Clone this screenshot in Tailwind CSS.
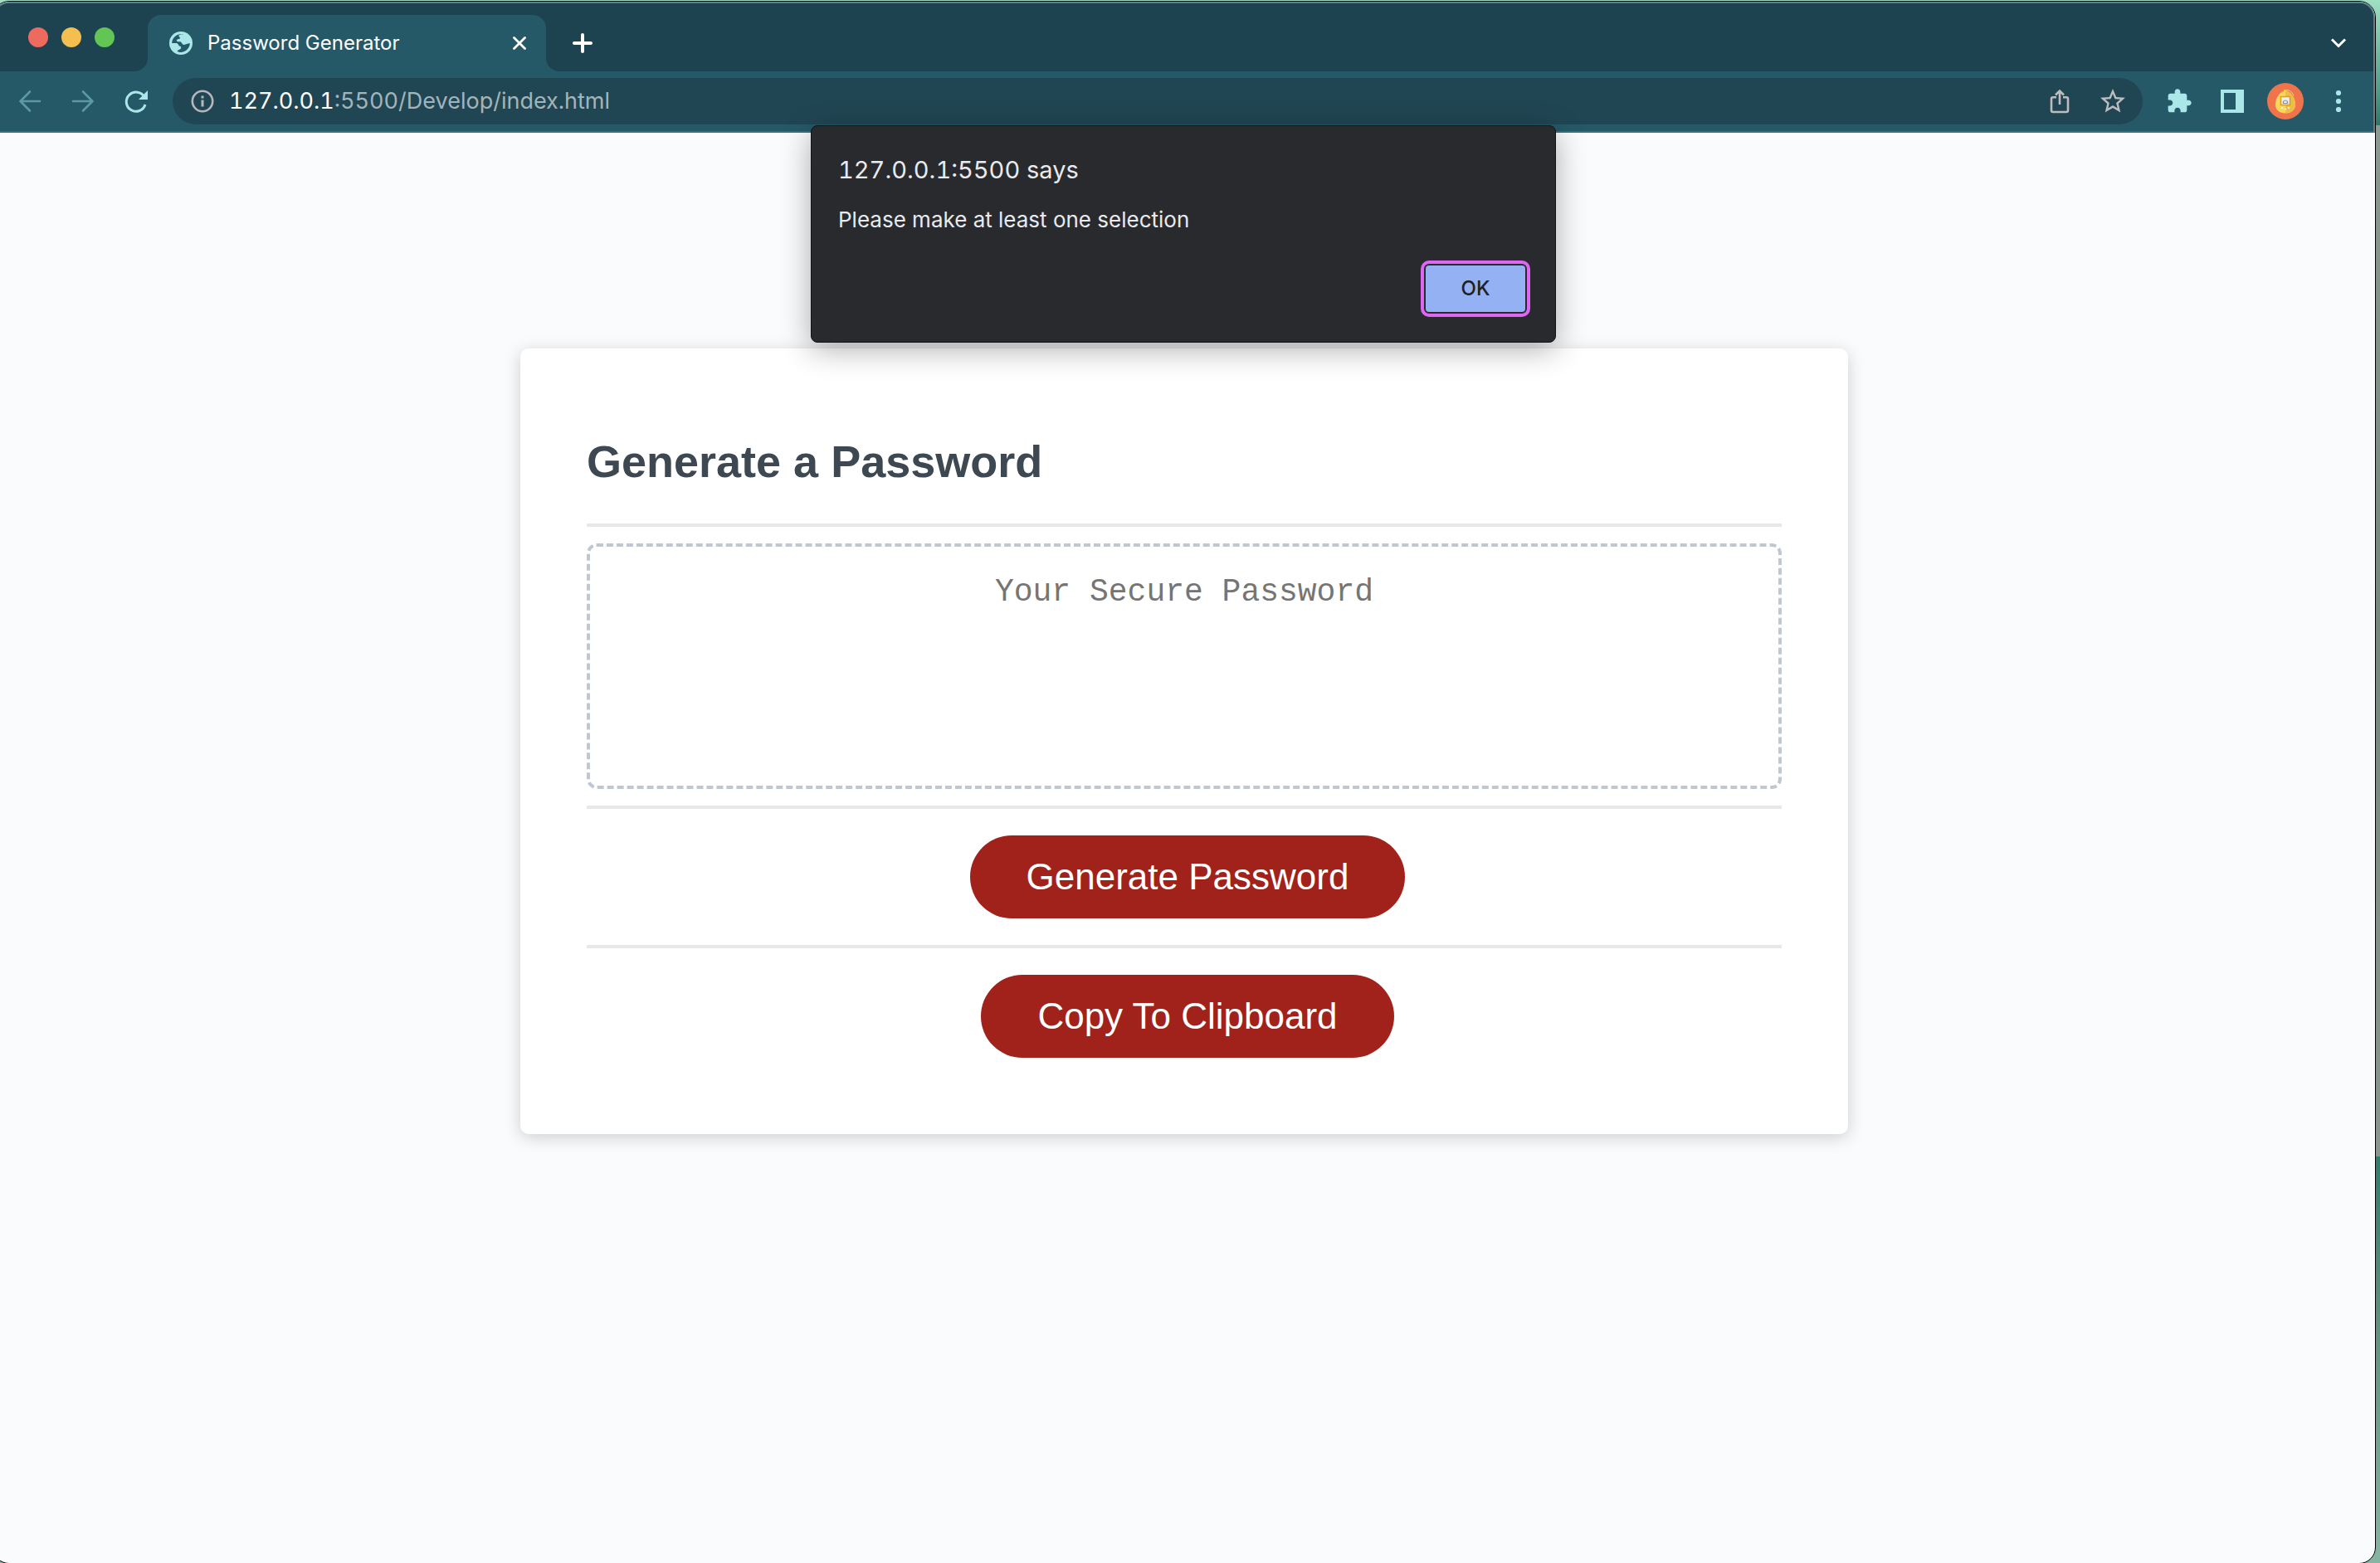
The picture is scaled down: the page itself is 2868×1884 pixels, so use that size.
<!DOCTYPE html>
<html lang="en">
<head>
<meta charset="utf-8">
<meta name="viewport" content="width=device-width, initial-scale=1">
<title>Password Generator</title>
<script src="https://cdn.jsdelivr.net/npm/@tailwindcss/browser@4"></script>
</head>
<body class="flex h-screen overflow-hidden bg-[linear-gradient(to_bottom,#9fe0c4_0%,#4f9a86_6%,#2f7668_8%,#8b9a92_8%,#74887e_40%,#8a968f_74%,#2f7d6c_74%,#5f8f7d_84%,#86b5a3_100%)] font-['Inter',sans-serif]">

<!-- Browser window -->
<div class="relative mt-px mr-[5px] -mb-px -ml-[9px] flex min-w-0 flex-1 flex-col rounded-[20px] border border-black bg-[#fafbfd]">

  <header class="rounded-t-[19px] border-x-2 border-t-2 border-[#5f8187] bg-[#265968]">
    <!-- Tab strip -->
    <div class="flex h-[82px] overflow-hidden rounded-t-[17px]">
      <div class="flex w-[184px] items-center gap-4 rounded-br-2xl bg-[#1d4350] pl-10">
        <button class="size-6 rounded-full bg-[#ee6a5f]" aria-label="Close window"></button>
        <button class="size-6 rounded-full bg-[#f5bf4f]" aria-label="Minimize window"></button>
        <button class="size-6 rounded-full bg-[#62c554]" aria-label="Zoom window"></button>
      </div>
      <div class="w-[480px] bg-[#1d4350] pt-[14px]">
        <div class="flex h-[68px] items-center rounded-t-2xl bg-[#265968] pr-6 pl-[26px]">
          <svg class="size-7" viewBox="0 0 28 28" aria-hidden="true">
            <circle cx="14" cy="14" r="14" fill="#abe7e8"/>
            <path fill="#265968" d="M17.500 3.300C14.500 2.900 12.500 3.500 11.300 4.700C11.200 6.500 13 6.500 13 8C13 9.500 9.500 8.500 8.800 10.500C8.500 12 10.500 12.300 12.500 12.200C15 12 14.800 15 17 15.700C19.500 16.500 21 14.300 24.900 14.300C24.700 19.500 20.500 24.500 14.500 25C12.500 25 10.500 24.500 9.700 24C9.700 21.500 14 22.500 14.200 19.500C14.300 17 11.500 18.200 11 16C10.500 14 9 13.900 7 13.900H3.100C3.300 11 4.500 8 6.800 6C9.500 3.500 13.500 2.300 17.500 3.300Z"/>
          </svg>
          <span class="ml-[18px] flex-1 text-2xl text-white">Password Generator</span>
          <button aria-label="Close tab"><svg class="size-4" viewBox="0 0 16 16" fill="none" stroke="#fff" stroke-width="2.800" stroke-linecap="round"><path d="M1.500 1.500l13 13M14.500 1.500l-13 13"/></svg></button>
        </div>
      </div>
      <div class="flex flex-1 items-center justify-between rounded-bl-2xl bg-[#1d4350] pt-[14px] pr-8 pl-8">
        <button aria-label="New tab"><svg class="size-6" viewBox="0 0 24 24" fill="none" stroke="#fff" stroke-width="4" stroke-linecap="round"><path d="M12 2v20M2 12h20"/></svg></button>
        <button aria-label="Search tabs"><svg class="h-3 w-5" viewBox="0 0 20 12" fill="none" stroke="#fff" stroke-width="3"><path d="M2 1.500l8 8 8-8"/></svg></button>
      </div>
    </div>

    <!-- Toolbar -->
    <div class="flex h-[74px] items-center gap-2 border-b-2 border-[#38717f] px-[14px]">
      <button class="flex w-14 justify-center" aria-label="Back"><svg class="size-8" viewBox="0 0 32 32" fill="none" stroke="#5b9aa4" stroke-width="2.600" stroke-linecap="round"><path d="M16 4.500L4.500 16 16 27.500M4.500 16H28"/></svg></button>
      <button class="flex w-14 justify-center" aria-label="Forward"><svg class="size-8" viewBox="0 0 32 32" fill="none" stroke="#5b9aa4" stroke-width="2.600" stroke-linecap="round"><path d="M16 4.500L27.500 16 16 27.500M27.500 16H4"/></svg></button>
      <button class="flex w-14 justify-center" aria-label="Reload"><svg class="size-8" viewBox="0 0 32 32" fill="none"><path d="M26 11A11.600 11.600 0 1 0 27 20" stroke="#abe7e8" stroke-width="3"/><path d="M30 3v11H19z" fill="#abe7e8"/></svg></button>
      <div class="ml-2 mr-2 flex h-14 min-w-0 flex-1 items-center rounded-full bg-[#214653] pr-2 pl-5">
        <svg class="size-8" viewBox="0 0 32 32" fill="none" stroke="#b5b7bc"><circle cx="16" cy="16" r="12.200" stroke-width="2.600"/><path d="M16 14.500v8M16 9.500v3" stroke-width="3"/></svg>
        <div class="ml-4 flex-1 text-[27px] text-[#a3b4ba] tabular-nums" role="textbox" tabindex="0" aria-label="Address"><span class="text-white">127.0.0.1</span>:5500/Develop/index.html</div>
        <button class="flex w-14 justify-center" aria-label="Share"><svg class="size-8" viewBox="0 0 32 32" fill="none" stroke="#bdbdbf" stroke-width="2.600"><path d="M12 11.300H8a2 2 0 0 0-2 2V27a2 2 0 0 0 2 2h16a2 2 0 0 0 2-2V13.300a2 2 0 0 0-2-2h-4M16 20V4M11 8.500l5-5 5 5"/></svg></button>
        <button class="ml-2 flex w-14 justify-center" aria-label="Bookmark"><svg class="size-9" viewBox="0 0 24 24" fill="#bdbdbf"><path d="M22 9.240l-7.190-.62L12 2 9.190 8.630 2 9.240l5.460 4.730L5.820 21 12 17.270 18.180 21l-1.630-7.030L22 9.240zM12 15.400l-3.760 2.270 1-4.280-3.320-2.880 4.380-.38L12 6.100l1.710 4.040 4.380.38-3.320 2.880 1 4.280L12 15.400z"/></svg></button>
      </div>
      <button class="flex w-14 justify-center" aria-label="Extensions"><svg class="size-8" viewBox="0 0 24 24" fill="#abe7e8"><path d="M20.500 11H19V7c0-1.100-.9-2-2-2h-4V3.500C13 2.120 11.880 1 10.500 1S8 2.120 8 3.500V5H4c-1.100 0-1.990.9-1.990 2v3.800H3.500c1.490 0 2.700 1.210 2.700 2.700s-1.210 2.700-2.700 2.700H2V20c0 1.100.9 2 2 2h3.800v-1.500c0-1.490 1.210-2.700 2.700-2.700 1.490 0 2.700 1.210 2.700 2.700V22H17c1.100 0 2-.9 2-2v-4h1.500c1.380 0 2.500-1.120 2.500-2.500S21.880 11 20.500 11z"/></svg></button>
      <button class="flex w-14 justify-center" aria-label="Side panel"><svg class="size-7" viewBox="0 0 28 28"><path fill="#abe7e8" fill-rule="evenodd" d="M0 0h28v28H0zM4 4v20h14V4z"/></svg></button>
      <button class="flex w-14 justify-center" aria-label="Profile">
        <svg class="size-11" viewBox="0 0 44 44">
          <circle cx="22" cy="22" r="22" fill="#ef744b"/>
          <path d="M20 8h4v3h-4z" fill="#f7c928"/>
          <path d="M22 9.500C28 9.500 34 18 34 26c0 6.500-5 10.500-12 10.500S10 32.500 10 26C10 18 16 9.500 22 9.500z" fill="#f8d75a"/>
          <path d="M22 9.500C28 9.500 34 18 34 26c0 6.500-5 10.500-12 10.500z" fill="#edbd45"/>
          <path d="M24 8.500c4 .5 7 3.500 8 7" fill="none" stroke="#f8c9a0" stroke-width="1"/>
          <rect x="16.500" y="16.500" width="11" height="10" fill="#eceff0" stroke="#d59f2c" stroke-width="1.500"/>
          <path d="M19.500 24.500v-2q2.500-3 5 0v2z" fill="none" stroke="#8b9299" stroke-width="1.200"/>
          <circle cx="18" cy="30" r="1.100" fill="#fff"/><circle cx="22" cy="31.500" r="1.100" fill="#fff"/><circle cx="26" cy="30" r="1.100" fill="#fff"/>
        </svg>
      </button>
      <button class="flex w-14 justify-center" aria-label="Menu"><svg class="size-8" viewBox="0 0 32 32" fill="#abe7e8"><circle cx="16" cy="6" r="3.100"/><circle cx="16" cy="16" r="3.100"/><circle cx="16" cy="26" r="3.100"/></svg></button>
    </div>
  </header>

  <!-- Page -->
  <main class="flex-1 px-8 pt-[260px]">
    <section class="mx-auto max-w-[1600px] rounded-[10px] bg-white p-20 font-['Liberation_Sans',Arial,sans-serif] shadow-[0_4px_20px_rgba(0,0,0,0.18)]">
      <h1 class="border-b-4 border-[#e7e8ea] pt-6 pb-[43px] text-[54px] leading-[64px] font-bold text-[#3e4852]">Generate a Password</h1>
      <div class="border-b-4 border-[#e7e8ea] py-5">
        <textarea readonly aria-label="Your Secure Password" placeholder="Your Secure Password" class="block h-[296px] w-full resize-none rounded-xl border-4 border-dashed border-[#c1c7d0] p-8 text-center font-['Liberation_Mono',monospace] text-[38px] leading-[46px] placeholder:text-[#757575]"></textarea>
      </div>
      <div class="flex justify-center border-b-4 border-[#e7e8ea] py-8 pl-2">
        <button class="h-[100px] rounded-full bg-[#a0221a] px-17 text-[44px] text-white">Generate Password</button>
      </div>
      <div class="flex justify-center pt-8 pb-3 pl-2">
        <button class="h-[100px] rounded-full bg-[#a0221a] px-17 text-[44px] text-white">Copy To Clipboard</button>
      </div>
    </section>
  </main>

  <!-- Alert -->
  <dialog open aria-labelledby="alert-title" class="absolute right-0.5 left-0 top-[149px] mx-auto w-[898px] rounded-lg border border-[#111214] bg-[#292a2d] pt-[33px] pr-9 pb-9 pl-8 text-[#e8eaed] shadow-[0_8px_36px_rgba(0,0,0,0.32)]">
    <h2 id="alert-title" class="text-[29px] leading-10 tabular-nums">127.0.0.1:5500 says</h2>
    <p class="mt-[22px] text-[26px] leading-9">Please make at least one selection</p>
    <div class="mt-[37px] flex justify-end">
      <button class="h-14 w-[120px] rounded-[4px] bg-[#94b2f3] text-2xl font-medium text-[#202124] outline-4 outline-offset-2 outline-[#dd66f3]">OK</button>
    </div>
  </dialog>
</div>
</body>
</html>
